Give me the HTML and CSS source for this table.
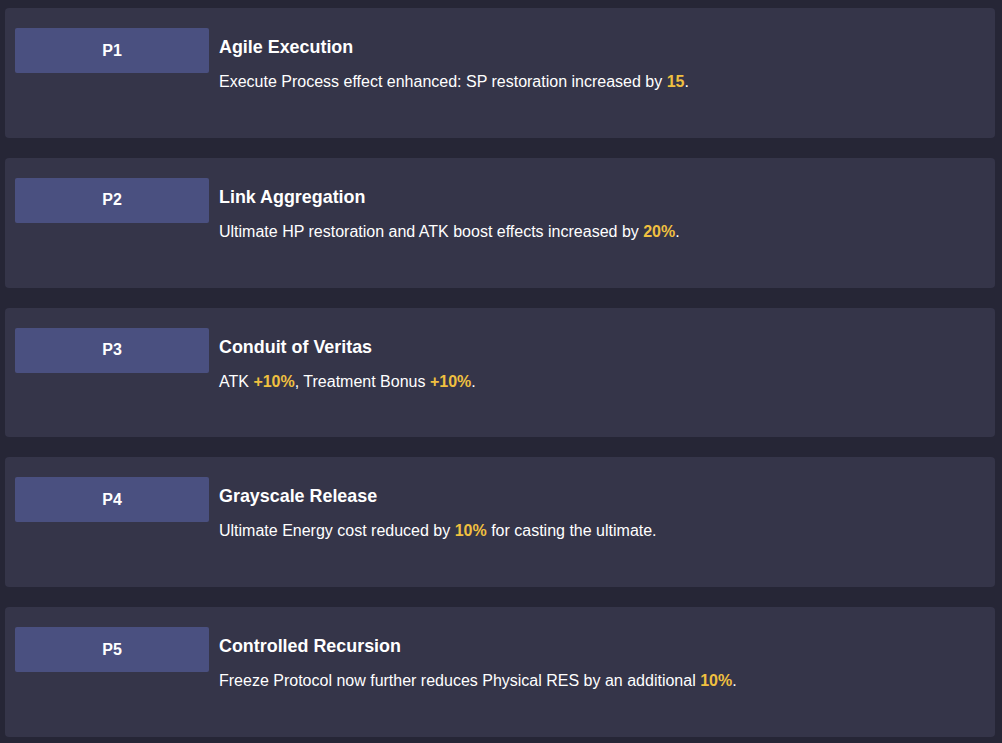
FILE: index.html
```html
<!DOCTYPE html>
<html lang="en">
<head>
<meta charset="utf-8">
<link rel="stylesheet" href="styles.css">
</head>
<body>
<div class="list">
  <div class="card">
    <div class="badge">P1</div>
    <div class="info">
      <div class="title">Agile Execution</div>
      <div class="desc">Execute Process effect enhanced: SP restoration increased by <span class="hl">15</span>.</div>
    </div>
  </div>
  <div class="card">
    <div class="badge">P2</div>
    <div class="info">
      <div class="title">Link Aggregation</div>
      <div class="desc">Ultimate HP restoration and ATK boost effects increased by <span class="hl">20%</span>.</div>
    </div>
  </div>
  <div class="card">
    <div class="badge">P3</div>
    <div class="info">
      <div class="title">Conduit of Veritas</div>
      <div class="desc">ATK <span class="hl">+10%</span>, Treatment Bonus <span class="hl">+10%</span>.</div>
    </div>
  </div>
  <div class="card">
    <div class="badge">P4</div>
    <div class="info">
      <div class="title">Grayscale Release</div>
      <div class="desc">Ultimate Energy cost reduced by <span class="hl">10%</span> for casting the ultimate.</div>
    </div>
  </div>
  <div class="card">
    <div class="badge">P5</div>
    <div class="info">
      <div class="title">Controlled Recursion</div>
      <div class="desc">Freeze Protocol now further reduces Physical RES by an additional <span class="hl">10%</span>.</div>
    </div>
  </div>
</div>
</body>
</html>
```
FILE: styles.css
```css
html, body {
  margin: 0;
  background: #262636;
}
body {
  font-family: "Liberation Sans", Arial, sans-serif;
  color: #ffffff;
  padding: 8px 7px 0 5px;
}
.list {
  display: flex;
  flex-direction: column;
  gap: 20px;
}
.card {
  background: #353549;
  border-radius: 4px;
  height: 129.75px;
  box-sizing: border-box;
  padding: 20px 10px;
  display: flex;
  gap: 10px;
}
.badge {
  flex: 0 0 194px;
  height: 45px;
  background: #4a5080;
  border-radius: 2px;
  display: flex;
  align-items: center;
  justify-content: center;
  font-weight: bold;
  font-size: 16px;
}
.info {
  padding-top: 8px;
}
.title {
  font-weight: bold;
  font-size: 17.9px;
  line-height: 22px;
}
.desc {
  margin-top: 14px;
  font-size: 16px;
  line-height: 20px;
}
.hl {
  color: #f0c040;
  font-weight: bold;
}
```
